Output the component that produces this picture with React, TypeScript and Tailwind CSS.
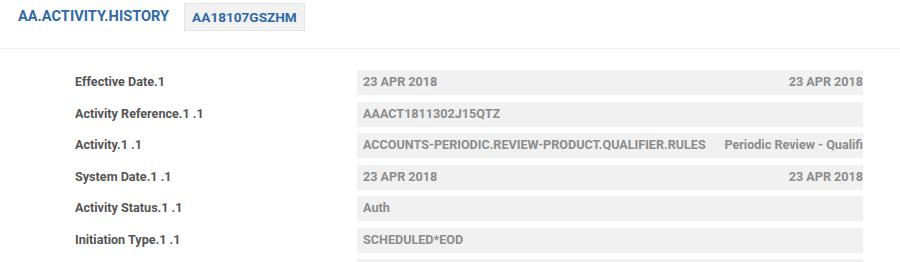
import React from "react";

type Row = { label: string; value: string; extra?: string };

const rows: Row[] = [
  { label: "Effective Date.1", value: "23 APR 2018", extra: "23 APR 2018" },
  { label: "Activity Reference.1 .1", value: "AAACT1811302J15QTZ" },
  {
    label: "Activity.1 .1",
    value: "ACCOUNTS-PERIODIC.REVIEW-PRODUCT.QUALIFIER.RULES",
    extra: "Periodic Review - Qualifi",
  },
  { label: "System Date.1 .1", value: "23 APR 2018", extra: "23 APR 2018" },
  { label: "Activity Status.1 .1", value: "Auth" },
  { label: "Initiation Type.1 .1", value: "SCHEDULED*EOD" },
  { label: "", value: "" },
];

export default function App() {
  return (
    <div
      className="w-[900px] h-[262px] overflow-hidden bg-white"
      style={{ fontFamily: "Roboto, 'Liberation Sans', sans-serif" }}
    >
      <div className="flex items-start pl-[18px] pt-[3px] pb-[17px] border-b border-[#eeeeee]">
        <div className="h-[28px] flex items-center text-[14.6px] font-bold text-[#2f6aa5]">
          AA.ACTIVITY.HISTORY
        </div>
        <div className="ml-[15px] h-[28px] w-[121px] flex items-center pl-[7px] bg-[#f2f2f2] border border-[#e3e3e3] text-[13.6px] font-bold text-[#2f6aa5]">
          AA18107GSZHM
        </div>
      </div>
      <div className="pt-[21px] pl-[75px] flex flex-col gap-[6.5px]">
        {rows.map((r, i) => (
          <div key={i} className="flex items-center h-[25px]">
            <div className="w-[282px] shrink-0 text-[12.6px] font-bold text-[#555555]">
              {r.label}
            </div>
            <div className="w-[506px] h-[25px] shrink-0 bg-[#f1f1f1] flex items-center pl-[6px] overflow-hidden whitespace-nowrap text-[12.6px] font-bold text-[#8c8c8c]">
              <span className="shrink-0">{r.value}</span>
              {r.extra && (
                <span className="shrink-0 ml-auto pl-[12px]">{r.extra}</span>
              )}
            </div>
          </div>
        ))}
      </div>
    </div>
  );
}
